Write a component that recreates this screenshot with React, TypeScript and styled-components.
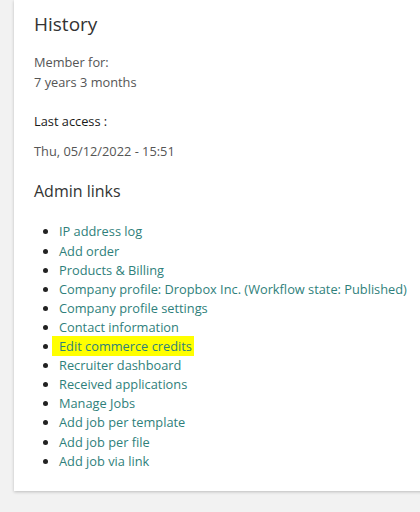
import React from "react";
import styled, { createGlobalStyle } from "styled-components";

const GlobalStyle = createGlobalStyle`
    html, body {
        margin: 0;
        padding: 0;
        background-color: #f2f2f2;
        font-family: "Open Sans", "Liberation Sans", sans-serif;
    }
`

const Page = styled.div`
    width: 420px;
    height: 512px;
    overflow: hidden;
    padding-left: 14px;
    box-sizing: border-box;
`

const Card = styled.div`
    background-color: #ffffff;
    width: 440px;
    padding: 12px 0 20px 20px;
    box-sizing: border-box;
    box-shadow: 0 1px 3px rgba(0, 0, 0, 0.22);
`

const Heading = styled.h2<{ $size: number }>`
    margin: 0;
    font-weight: 400;
    font-size: ${(p) => p.$size}px;
    line-height: 1.3;
    color: #333;
`

const Text = styled.div<{ $strong?: boolean }>`
    font-size: 12.8px;
    line-height: 20px;
    color: ${(p) => (p.$strong ? "#1a1a1a" : "#555")};
    font-weight: ${(p) => (p.$strong ? 500 : 400)};
`

const Block = styled.div<{ $top: number }>`
    margin-top: ${(p) => p.$top}px;
`

const LinkList = styled.ul`
    margin: 21px 0 0;
    padding-left: 25px;
    list-style: disc;
    color: #222;
`

const Item = styled.li`
    font-size: 12.8px;
    line-height: 19.1px;
`

const ItemLink = styled.a<{ $highlight?: boolean }>`
    color: #2f7f7b;
    text-decoration: none;
    background-color: ${(p) => (p.$highlight ? "#ffff00" : "transparent")};
    padding: ${(p) => (p.$highlight ? "1px 2px 1px 7px" : "0")};
    margin-left: ${(p) => (p.$highlight ? "-7px" : "0")};
`

const links = [
    "IP address log",
    "Add order",
    "Products & Billing",
    "Company profile: Dropbox Inc. (Workflow state: Published)",
    "Company profile settings",
    "Contact information",
    "Edit commerce credits",
    "Recruiter dashboard",
    "Received applications",
    "Manage Jobs",
    "Add job per template",
    "Add job per file",
    "Add job via link",
]

const App = () => (
    <>
        <GlobalStyle />
        <Page>
            <Card>
                <Heading $size={19}>History</Heading>
                <Block $top={15}>
                    <Text>Member for:</Text>
                    <Text>7 years 3 months</Text>
                </Block>
                <Block $top={19}>
                    <Text $strong>Last access :</Text>
                </Block>
                <Block $top={10}>
                    <Text>Thu, 05/12/2022 - 15:51</Text>
                </Block>
                <Block $top={20}>
                    <Heading $size={16}>Admin links</Heading>
                </Block>
                <LinkList>
                    {links.map((l) => (
                        <Item key={l}>
                            <ItemLink href="#" $highlight={l === "Edit commerce credits"}>
                                {l}
                            </ItemLink>
                        </Item>
                    ))}
                </LinkList>
            </Card>
        </Page>
    </>
);

export default App;
